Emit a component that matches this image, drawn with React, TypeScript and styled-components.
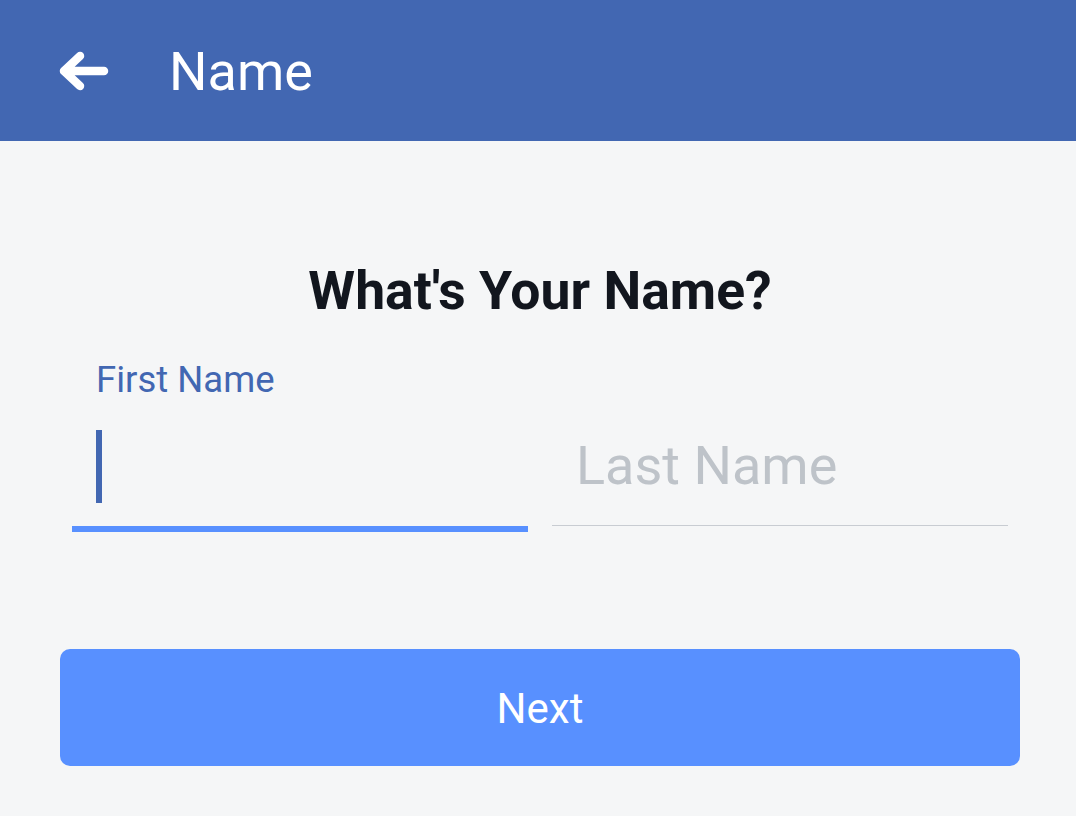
import React from "react";
import styled, { createGlobalStyle } from "styled-components";

const GlobalStyle = createGlobalStyle`
  html, body {
    margin: 0;
    padding: 0;
    background: #f5f6f7;
    font-family: Roboto, "Liberation Sans", Arial, sans-serif;
  }
  * {
    box-sizing: border-box;
  }
`;

const App: React.FC = () => {
  return (
    <Page>
      <GlobalStyle />
      <TopBar>
        <BackButton aria-label="Back">
          <svg width="56" height="48" viewBox="0 0 56 48" fill="none">
            <path
              d="M8 24 H48 M24 9 L8 24 L24 39"
              stroke="#ffffff"
              strokeWidth="8.5"
              strokeLinecap="round"
              strokeLinejoin="round"
            />
          </svg>
        </BackButton>
        <BarTitle>Name</BarTitle>
      </TopBar>
      <Content>
        <Heading>What's Your Name?</Heading>
        <Fields>
          <FieldLabel>First Name</FieldLabel>
          <InputWrap>
            <TextInput aria-label="First Name" focused />
            <Caret />
          </InputWrap>
          <InputWrap second>
            <TextInput aria-label="Last Name" placeholder="Last Name" />
          </InputWrap>
        </Fields>
        <NextButton>Next</NextButton>
      </Content>
    </Page>
  );
};

export default App;

const Page = styled.div`
  min-height: 816px;
  background: #f5f6f7;
`;

const TopBar = styled.header`
  display: flex;
  align-items: center;
  gap: 57px;
  height: 141px;
  padding-left: 56px;
  background: #4267b2;
`;

const BackButton = styled.button`
  display: flex;
  padding: 0;
  border: none;
  background: none;
  cursor: pointer;
`;

const BarTitle = styled.h1`
  margin: 0;
  padding-top: 3px;
  font-size: 54px;
  font-weight: 400;
  line-height: 1;
  color: #ffffff;
`;

const Content = styled.main`
  display: flex;
  flex-direction: column;
  padding: 123px 56px 0 60px;
`;

const Heading = styled.h2`
  margin: 0 0 44px;
  text-align: center;
  font-size: 53.5px;
  font-weight: 700;
  line-height: 1;
  color: #12161e;
`;

const Fields = styled.div`
  display: grid;
  grid-template-columns: 456px 456px;
  column-gap: 24px;
  align-items: start;
  padding: 0 12px;
`;

const FieldLabel = styled.label`
  grid-column: 1;
  grid-row: 1;
  margin-bottom: 28px;
  padding-left: 24px;
  font-size: 36.5px;
  line-height: 1;
  color: #4267b2;
`;

const InputWrap = styled.div<{ second?: boolean }>`
  position: relative;
  grid-column: ${(p) => (p.second ? 2 : 1)};
  grid-row: 2;
`;

const TextInput = styled.input<{ focused?: boolean }>`
  display: block;
  width: 100%;
  height: 100px;
  padding: 0 24px 20px;
  border: none;
  border-bottom: 1px solid #c8ccd2;
  outline: none;
  background: transparent;
  font-family: Roboto, "Liberation Sans", Arial, sans-serif;
  font-size: 54px;
  line-height: 80px;
  color: #1c1e21;
  caret-color: transparent;
  ${(p) => p.focused && "border-bottom: 6px solid #5890ff; height: 106px;"}
  &::placeholder {
    color: #bec3c9;
  }
`;

const Caret = styled.span`
  position: absolute;
  left: 24px;
  top: 4px;
  width: 6px;
  height: 73px;
  background: #4267b2;
`;

const NextButton = styled.button`
  display: flex;
  align-items: center;
  justify-content: center;
  width: 960px;
  height: 117px;
  margin-top: 117px;
  padding-top: 2px;
  border: none;
  border-radius: 10px;
  background: #5890ff;
  font-family: Roboto, "Liberation Sans", Arial, sans-serif;
  font-size: 42px;
  color: #ffffff;
  cursor: pointer;
`;
